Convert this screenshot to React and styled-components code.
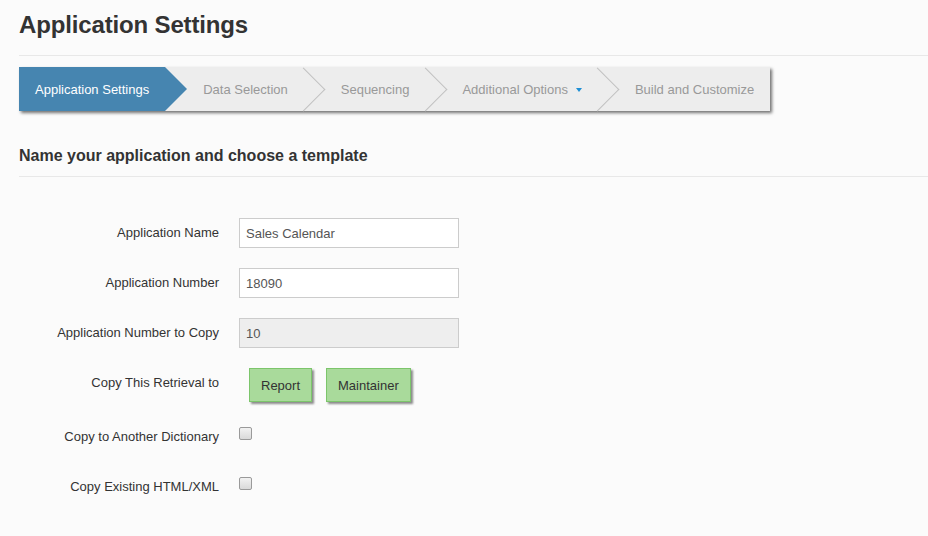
import React from "react";
import styled, { createGlobalStyle } from "styled-components";

const GlobalStyle = createGlobalStyle`
  body {
    margin: 0;
    background: #fbfbfb;
    font-family: "Liberation Sans", Arial, sans-serif;
    color: #333;
  }
`;

const Page = styled.div`
  padding: 12px 0 40px 19px;
  box-sizing: border-box;
  width: 928px;
  overflow: hidden;
`;

const Title = styled.h1`
  margin: 0;
  font-size: 24px;
  line-height: 26px;
  font-weight: bold;
  color: #333;
  letter-spacing: -0.15px;
`;

const Rule = styled.div`
  height: 1px;
  background: #e8e8e8;
  margin-top: ${(p) => p.$top}px;
`;

const StepBar = styled.div`
  display: inline-flex;
  margin-top: 11px;
  height: 44px;
  background: #ededed;
  box-shadow: 2px 2px 3px rgba(0, 0, 0, 0.55);
`;

const Step = styled.div`
  position: relative;
  display: flex;
  align-items: center;
  height: 44px;
  padding: 0 16px 0 ${(p) => p.$padLeft}px;
  font-size: 13px;
  color: ${(p) => (p.$active ? "#fff" : "#999")};
  background: ${(p) => (p.$active ? "#4685b0" : "transparent")};
  white-space: nowrap;

  &::after {
    content: "";
    position: absolute;
    z-index: 2;
    ${(p) =>
      p.$last
        ? "display: none;"
        : p.$active
        ? `
      top: 0;
      right: -22px;
      width: 0;
      height: 0;
      border-left: 22px solid #4685b0;
      border-top: 22px solid transparent;
      border-bottom: 22px solid transparent;
    `
        : `
      top: 6.5px;
      right: -15.5px;
      width: 30px;
      height: 30px;
      border-top: 1px solid #c2c2c2;
      border-right: 1px solid #c2c2c2;
      transform: rotate(45deg);
    `}
  }
`;

const Caret = styled.span`
  display: inline-block;
  width: 0;
  height: 0;
  margin-left: 8px;
  margin-top: 2px;
  border-top: 4px solid #1e8fd5;
  border-left: 3.5px solid transparent;
  border-right: 3.5px solid transparent;
`;

const SectionTitle = styled.h2`
  margin: 36px 0 0;
  font-size: 16px;
  line-height: 18px;
  font-weight: bold;
  color: #333;
`;

const Form = styled.div`
  display: grid;
  grid-template-columns: 200px 1fr;
  column-gap: 20px;
  row-gap: 20px;
  margin-top: 41px;
`;

const Label = styled.div`
  text-align: right;
  font-size: 13px;
  line-height: 16px;
  padding-top: 7px;
  color: #333;
`;

const Field = styled.div`
  display: flex;
  align-items: flex-start;
  gap: 14px;
  min-height: 30px;
`;

const TextInput = styled.input`
  box-sizing: border-box;
  width: 220px;
  height: 30px;
  padding: 0 6px;
  border: 1px solid #ccc;
  background: ${(p) => (p.disabled ? "#eeeeee" : "#fff")};
  font-family: inherit;
  font-size: 13px;
  color: #555;
  outline: none;
`;

const GreenButton = styled.button`
  height: 34px;
  padding: 0 11px;
  background: #a9da9b;
  border: 1px solid #7cc56b;
  box-shadow: 2px 2px 2px rgba(0, 0, 0, 0.45);
  font-family: inherit;
  font-size: 13px;
  color: #333;
  cursor: pointer;

  &:first-child {
    margin-left: 10px;
  }
`;

const CheckBox = styled.input.attrs({ type: "checkbox" })`
  appearance: none;
  box-sizing: border-box;
  width: 13px;
  height: 13px;
  margin: 5px 0 0 0;
  border: 1px solid #9a9a9a;
  border-radius: 2px;
  background: linear-gradient(#f2f2f2, #d9d9d9);
`;

const steps = [
  "Application Settings",
  "Data Selection",
  "Sequencing",
  "Additional Options",
  "Build and Customize",
];

export default function App() {
  return (
    <Page>
      <GlobalStyle />
      <Title>Application Settings</Title>
      <Rule $top={17} />
      <StepBar>
        {steps.map((s, i) => (
          <Step
            key={s}
            $padLeft={i === 0 ? 16 : i === 1 ? 38 : 37}
            $active={i === 0}
            $last={i === steps.length - 1}
          >
            {s}
            {s === "Additional Options" && <Caret />}
          </Step>
        ))}
      </StepBar>
      <SectionTitle>Name your application and choose a template</SectionTitle>
      <Rule $top={11} />
      <Form>
        <Label>Application Name</Label>
        <Field>
          <TextInput defaultValue="Sales Calendar" />
        </Field>
        <Label>Application Number</Label>
        <Field>
          <TextInput defaultValue="18090" />
        </Field>
        <Label>Application Number to Copy</Label>
        <Field>
          <TextInput defaultValue="10" disabled />
        </Field>
        <Label>Copy This Retrieval to</Label>
        <Field>
          <GreenButton>Report</GreenButton>
          <GreenButton>Maintainer</GreenButton>
        </Field>
        <Label>Copy to Another Dictionary</Label>
        <Field>
          <CheckBox />
        </Field>
        <Label>Copy Existing HTML/XML</Label>
        <Field>
          <CheckBox />
        </Field>
      </Form>
    </Page>
  );
}
